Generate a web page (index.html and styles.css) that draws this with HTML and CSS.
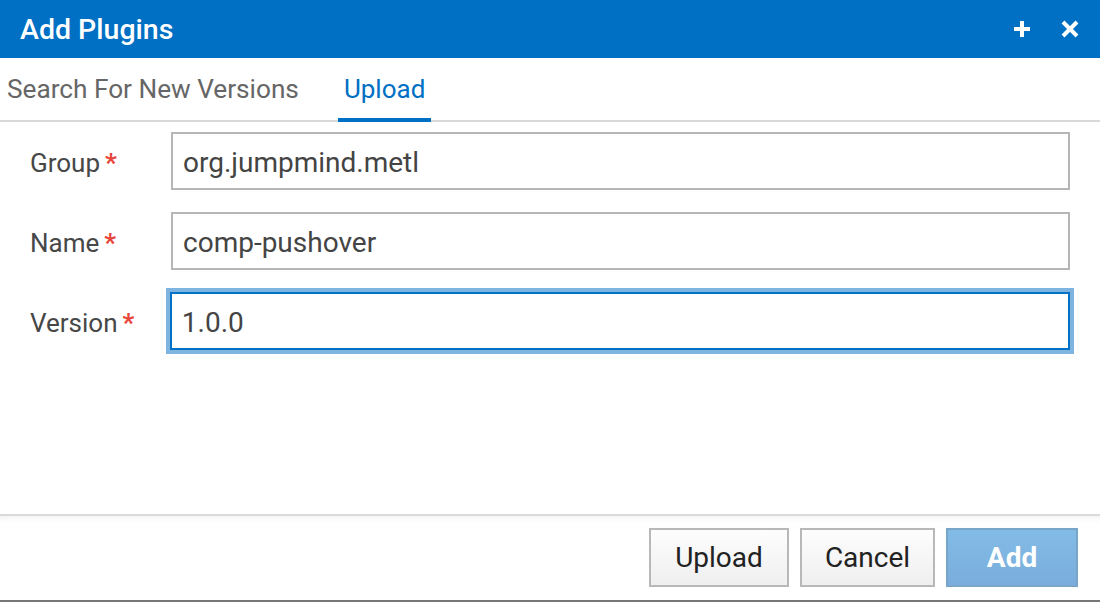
FILE: index.html
```html
<!DOCTYPE html>
<html>
<head>
<meta charset="utf-8">
<link rel="stylesheet" href="styles.css">
</head>
<body>
<div class="dialog">
  <div class="header">
    <div class="title">Add Plugins</div>
    <div class="tools">
      <svg class="tool" viewBox="0 0 18 18" width="18" height="18"><path d="M9 1v16M1 9h16" stroke="#fff" stroke-width="4" fill="none"/></svg>
      <svg class="tool" viewBox="0 0 18 18" width="18" height="18"><path d="M2 2l14 14M16 2L2 16" stroke="#fff" stroke-width="4" fill="none"/></svg>
    </div>
  </div>
  <div class="tabs">
    <div class="tab">Search For New Versions</div>
    <div class="tab active">Upload</div>
  </div>
  <div class="body">
    <div class="row">
      <label class="label">Group<span class="req">*</span></label>
      <div class="input">org.jumpmind.metl</div>
    </div>
    <div class="row">
      <label class="label">Name<span class="req">*</span></label>
      <div class="input">comp-pushover</div>
    </div>
    <div class="row">
      <label class="label">Version<span class="req">*</span></label>
      <div class="input focused">1.0.0</div>
    </div>
  </div>
  <div class="footer">
    <button class="btn">Upload</button>
    <button class="btn">Cancel</button>
    <button class="btn primary">Add</button>
  </div>
  <div class="bottom"></div>
</div>
</body>
</html>
```
FILE: styles.css
```css
* { box-sizing: border-box; }
html, body { margin: 0; padding: 0; background: #fff; }
body { font-family: Roboto, "Liberation Sans", sans-serif; width: 1100px; height: 602px; overflow: hidden; }
.dialog { display: flex; flex-direction: column; height: 602px; }
.header {
  height: 58px; background: #0070c4; color: #fff;
  display: flex; align-items: center; justify-content: space-between;
  padding: 0 21px 0 20px;
}
.title { font-size: 28.5px; font-weight: 500; }
.tools { display: flex; gap: 30px; align-items: center; }
.tool { display: block; }
.tabs {
  height: 64px; display: flex; align-items: flex-end; gap: 33px;
  border-bottom: 2px solid #d8d8d8; padding-left: 1px;
}
.tab {
  font-size: 26px; color: #666; padding: 0 6px 14px 6px;
  margin-bottom: -2px; border-bottom: 4px solid transparent; line-height: 30px;
}
.tab:first-child { font-size: 26.2px; }
.tab.active { color: #0070c4; border-bottom-color: #0070c4; }
.body { flex: 1; padding: 10px 30px 0 30px; display: flex; flex-direction: column; gap: 22px; }
.row { display: flex; align-items: center; height: 58px; }
.label { width: 141px; font-size: 26px; color: #474747; padding-top: 3px; }
.req { color: #e8453c; margin-left: 5px; font-size: 26px; font-weight: 700; }
.input {
  width: 899px; height: 58px; border: 2px solid #b6b6b6;
  font-size: 28px; color: #444; padding: 2px 10px 0 10px; display: flex; align-items: center;
  background: #fff;
}
.input.focused { border-color: #0071c5; box-shadow: 0 0 0 4px #7db4e0; margin-left: -1px; width: 901px; }
.footer {
  height: 86px; border-top: 2px solid #dadada;
  box-shadow: inset 0 6px 6px -4px rgba(0,0,0,0.06);
  display: flex; justify-content: flex-end; align-items: flex-start;
  padding: 12px 22px 0 0; gap: 11px;
}
.btn {
  height: 59px; font-family: Roboto, "Liberation Sans", sans-serif; font-size: 28px; color: #222;
  border: 2px solid #b8b8b8; background: linear-gradient(#fdfdfd, #efefef);
  padding: 0; margin: 0;
}
.btn:nth-child(1) { width: 140px; }
.btn:nth-child(2) { width: 135px; }
.btn.primary {
  width: 132px; color: #fff; font-weight: 700;
  background: linear-gradient(#82bce6, #7aaddb); border-color: #78a6cb;
}
.bottom { height: 2px; background: #777; }
```
